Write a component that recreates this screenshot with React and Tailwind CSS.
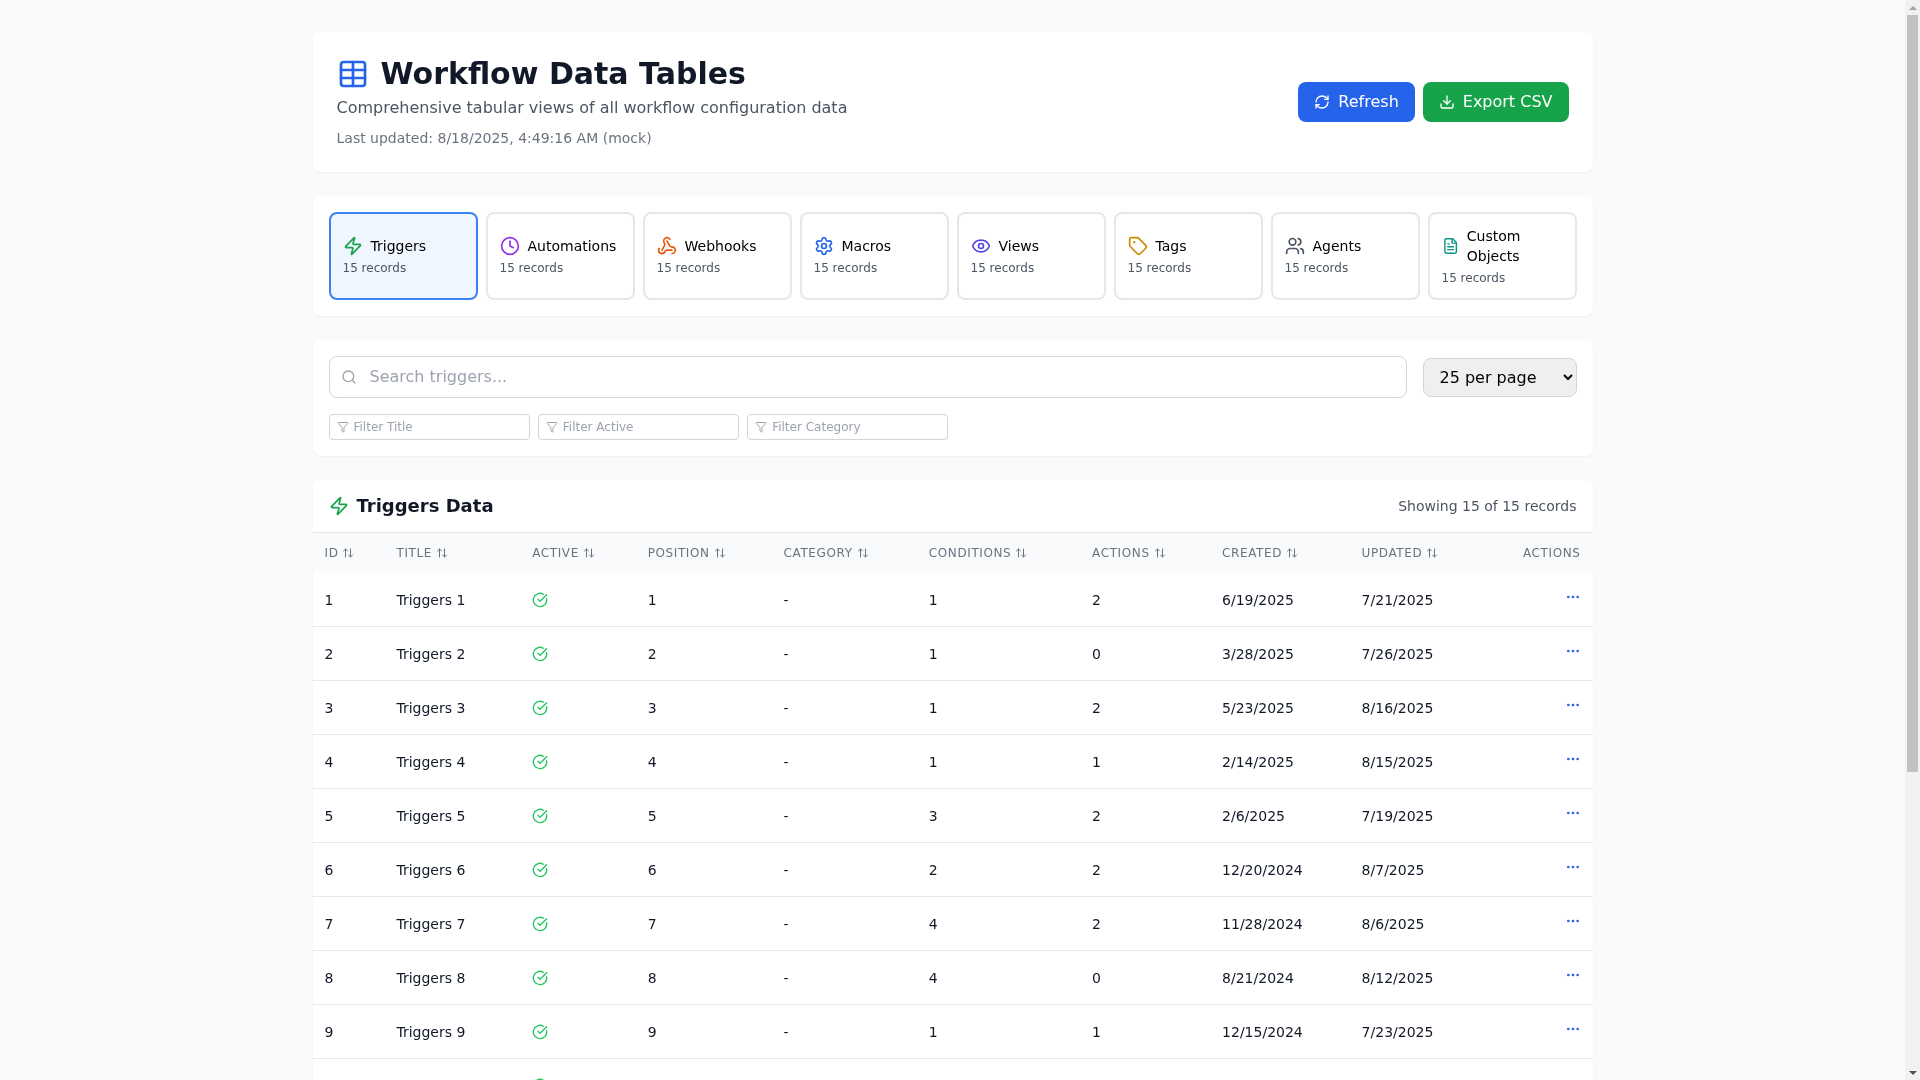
import React from 'react';
import {
  Table, RefreshCw, Download, Zap, Clock, Webhook, Settings, Eye, Tag, Users, FileText,
  Search, Filter, ArrowUpDown, CircleCheckBig, MoreHorizontal,
} from 'lucide-react';

const tabs = [
  { label: 'Triggers', icon: Zap, color: 'text-[#16a34a]', active: true },
  { label: 'Automations', icon: Clock, color: 'text-[#9333ea]' },
  { label: 'Webhooks', icon: Webhook, color: 'text-[#ea580c]' },
  { label: 'Macros', icon: Settings, color: 'text-[#2563eb]' },
  { label: 'Views', icon: Eye, color: 'text-[#4f46e5]' },
  { label: 'Tags', icon: Tag, color: 'text-[#ca8a04]' },
  { label: 'Agents', icon: Users, color: 'text-[#4b5563]' },
  { label: 'Custom Objects', icon: FileText, color: 'text-[#0d9488]' },
];

const columns = ['ID', 'Title', 'Active', 'Position', 'Category', 'Conditions', 'Actions', 'Created', 'Updated'];

const rows = [
  [1, 1, 2, '6/19/2025', '7/21/2025'],
  [2, 1, 0, '3/28/2025', '7/26/2025'],
  [3, 1, 2, '5/23/2025', '8/16/2025'],
  [4, 1, 1, '2/14/2025', '8/15/2025'],
  [5, 3, 2, '2/6/2025', '7/19/2025'],
  [6, 2, 2, '12/20/2024', '8/7/2025'],
  [7, 4, 2, '11/28/2024', '8/6/2025'],
  [8, 4, 0, '8/21/2024', '8/12/2025'],
  [9, 1, 1, '12/15/2024', '7/23/2025'],
  [10, 2, 1, '10/9/2024', '8/2/2025'],
  [11, 3, 2, '1/17/2025', '7/30/2025'],
  [12, 1, 0, '4/4/2025', '8/10/2025'],
  [13, 2, 2, '9/12/2024', '8/1/2025'],
  [14, 4, 1, '3/3/2025', '7/28/2025'],
  [15, 1, 2, '11/5/2024', '8/14/2025'],
];

function FilterInput({ name }) {
  return (
    <div className="relative">
      <Filter className="absolute left-2 top-[7px] w-3 h-3 text-[#9ca3af]" />
      <input
        placeholder={`Filter ${name}`}
        className="w-full pl-6 pr-2 py-1 text-xs border border-[#d1d5db] rounded bg-white placeholder:text-[#9ca3af]"
      />
    </div>
  );
}

// the browser hides real scrollbars in the photo, so the page draws its own
function Scrollbar() {
  return (
    <div className="sticky top-0 h-screen w-[15px] shrink-0 flex flex-col items-center bg-[#f1f1f1]">
      <div className="h-[15px] w-full flex items-center justify-center">
        <div className="border-x-[4px] border-b-[4px] border-x-transparent border-b-[#a3a3a3]" />
      </div>
      <div className="flex-1 w-full">
        <div className="h-[757px] mx-[2px] bg-[#c1c1c1]" />
      </div>
      <div className="h-[15px] w-full flex items-center justify-center">
        <div className="border-x-[4px] border-t-[4px] border-x-transparent border-t-[#505050]" />
      </div>
    </div>
  );
}

export default function App() {
  return (
    <div className="flex bg-[#f9fafb] font-['DejaVu_Sans',sans-serif] text-[#111827]">
      <div className="flex-1 min-w-0 min-h-[1498px] will-change-transform">
        <div className="max-w-7xl mx-auto py-8">
          <div className="bg-white rounded-lg shadow-xs p-6 mb-6 flex items-center justify-between">
            <div>
              <h1 className="flex items-center text-3xl font-bold text-[#111827] mb-1">
                <Table className="w-8 h-8 mr-3 text-[#2563eb]" />
                Workflow Data Tables
              </h1>
              <p className="text-[#4b5563]">Comprehensive tabular views of all workflow configuration data</p>
              <p className="text-sm text-[#6b7280] mt-2">Last updated: 8/18/2025, 4:49:16 AM (mock)</p>
            </div>
            <div className="flex gap-2">
              <button className="flex items-center px-4 py-2 rounded-lg bg-[#2563eb] text-white">
                <RefreshCw className="w-4 h-4 mr-2" />
                Refresh
              </button>
              <button className="flex items-center px-4 py-2 rounded-lg bg-[#16a34a] text-white">
                <Download className="w-4 h-4 mr-2" />
                Export CSV
              </button>
            </div>
          </div>

          <div className="bg-white rounded-lg shadow-xs p-4 mb-6 grid grid-cols-8 gap-2">
            {tabs.map((t) => (
              <button
                key={t.label}
                className={`p-3 rounded-lg border-2 text-left ${t.active ? 'border-[#3b82f6] bg-[#eff6ff]' : 'border-[#e5e7eb] bg-white'}`}
              >
                <div className="flex items-center">
                  <t.icon className={`w-5 h-5 mr-2 ${t.color}`} />
                  <span className="text-sm text-black">{t.label}</span>
                </div>
                <div className="text-xs text-[#4b5563] mt-1">15 records</div>
              </button>
            ))}
          </div>

          <div className="bg-white rounded-lg shadow-xs p-4 mb-6">
            <div className="flex items-center gap-4 mb-4">
              <div className="relative flex-1">
                <Search className="absolute left-3 top-[13px] w-4 h-4 text-[#9ca3af]" />
                <input
                  placeholder="Search triggers..."
                  className="w-full pl-10 pr-4 py-2 border border-[#d1d5db] rounded-lg placeholder:text-[#9ca3af]"
                />
              </div>
              <select defaultValue="25" className="px-3 py-2 border border-[#d1d5db] rounded-lg bg-[#efefef] text-black">
                <option value="10">10 per page</option>
                <option value="25">25 per page</option>
                <option value="50">50 per page</option>
                <option value="100">100 per page</option>
              </select>
            </div>
            <div className="grid grid-cols-6 gap-2">
              <FilterInput name="Title" />
              <FilterInput name="Active" />
              <FilterInput name="Category" />
            </div>
          </div>

          <div className="bg-white rounded-lg shadow-xs overflow-hidden">
            <div className="flex items-center justify-between px-4 py-3 border-b border-[#e5e7eb]">
              <h2 className="flex items-center text-lg font-semibold text-[#111827]">
                <Zap className="w-5 h-5 mr-2 text-[#16a34a]" />
                Triggers Data
              </h2>
              <span className="text-sm text-[#4b5563]">Showing 15 of 15 records</span>
            </div>
            <table className="w-full">
              <thead className="bg-[#f9fafb]">
                <tr>
                  {columns.map((c) => (
                    <th key={c} className="px-3 py-3 text-left text-xs font-medium text-[#6b7280] uppercase tracking-wider">
                      <div className="flex items-center space-x-1">
                        <span>{c}</span>
                        <ArrowUpDown className="w-3 h-3" />
                      </div>
                    </th>
                  ))}
                  <th className="px-3 py-3 text-right text-xs font-medium text-[#6b7280] uppercase tracking-wider">Actions</th>
                </tr>
              </thead>
              <tbody>
                {rows.map(([id, conditions, actions, created, updated]) => (
                  <tr key={id} className="border-b border-[#e5e7eb]">
                    <td className="px-3 py-4 text-sm whitespace-nowrap">{id}</td>
                    <td className="px-3 py-4 text-sm whitespace-nowrap">Triggers {id}</td>
                    <td className="px-3 py-4 text-sm whitespace-nowrap">
                      <CircleCheckBig className="w-4 h-4 text-[#22c55e]" />
                    </td>
                    <td className="px-3 py-4 text-sm whitespace-nowrap">{id}</td>
                    <td className="px-3 py-4 text-sm whitespace-nowrap">-</td>
                    <td className="px-3 py-4 text-sm whitespace-nowrap">{conditions}</td>
                    <td className="px-3 py-4 text-sm whitespace-nowrap">{actions}</td>
                    <td className="px-3 py-4 text-sm whitespace-nowrap">{created}</td>
                    <td className="px-3 py-4 text-sm whitespace-nowrap">{updated}</td>
                    <td className="px-3 py-4 text-sm whitespace-nowrap text-right">
                      <button className="text-[#2563eb]">
                        <MoreHorizontal className="w-4 h-4" />
                      </button>
                    </td>
                  </tr>
                ))}
              </tbody>
            </table>
          </div>
        </div>
      </div>
      <Scrollbar />
    </div>
  );
}
